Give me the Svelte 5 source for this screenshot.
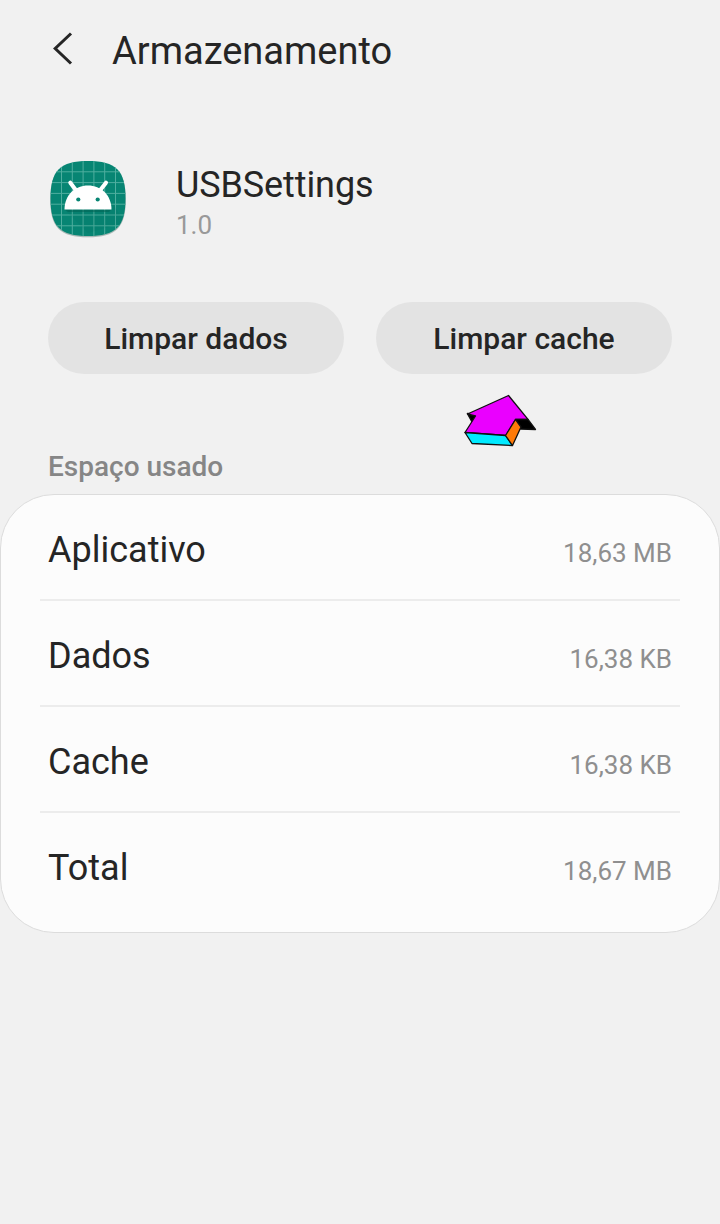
<script>
  const rows = [
    { label: 'Aplicativo', value: '18,63 MB' },
    { label: 'Dados', value: '16,38 KB' },
    { label: 'Cache', value: '16,38 KB' },
    { label: 'Total', value: '18,67 MB' },
  ];
  const grid = [13.5, 24.3, 35.1, 45.9, 56.7, 67.5];
</script>

<main>
  <header>
    <svg class="back" width="24" height="36" viewBox="0 0 24 36" aria-hidden="true">
      <path d="M21 2.500 5.200 17.500l15.800 15" fill="none" stroke="#252525" stroke-width="3" />
    </svg>
    <h1>Armazenamento</h1>
  </header>

  <section class="app">
    <svg width="80" height="80" viewBox="0 0 80 80" aria-hidden="true">
      <defs>
        <clipPath id="shape">
          <path d="M40 2C68 2 77.500 11.500 77.500 39.500S68 77 40 77 2.500 67.500 2.500 39.500 12 2 40 2Z" />
        </clipPath>
      </defs>
      <path d="M40 3C68 3 77.800 12.500 77.800 40.500S68 78.300 40 78.300 2.200 68.500 2.200 40.500 12 3 40 3Z" fill="#a9b9b6" />
      <g clip-path="url(#shape)">
        <rect width="80" height="80" fill="#078573" />
        {#each grid as p}
          <path d="M{p} 0V80M0 {p - 0.700}H80" stroke="#4fae9f" stroke-width="1" />
        {/each}
        <path d="M17 51 40 74l35-10V60L56 32Z" fill="#005f50" opacity=".08" />
        <path d="M16.500 50.500H63.500L61 53H20Z" fill="#005f50" opacity=".5" />
      </g>
      <path d="M22.300 23.700 27.800 31M58 23.700 52.300 31" stroke="#fff" stroke-width="4" stroke-linecap="round" />
      <path d="M16.500 50.500C16.500 36 27 26.500 40 26.500S63.500 36 63.500 50.500Z" fill="#fff" />
      <circle cx="30.300" cy="40.500" r="2.100" fill="#078573" />
      <circle cx="49.700" cy="40.500" r="2.100" fill="#078573" />
    </svg>
    <div>
      <h2>USBSettings</h2>
      <p>1.0</p>
    </div>
  </section>

  <div class="actions">
    <button>Limpar dados</button>
    <button>Limpar cache</button>
    <svg class="pointer" width="90" height="70" viewBox="0 0 90 70" aria-hidden="true">
      <g stroke="#111" stroke-width="1.3" stroke-linejoin="round">
        <path d="M12.300 28.500 22 29.500 17 37Z" fill="#000" />
        <path d="M53.500 10.500 12.500 29 20.500 31 10 47.500 51 50.500 60.500 34.500 73 34.300Z" fill="#ea00ff" />
        <path d="M73 34.300 80.500 44.500 65.500 44 60.500 34.500Z" fill="#000" />
        <path d="M10 47.500 50.500 50.500 57.500 60.500 17 58.500Z" fill="#00eaff" />
        <path d="M60.500 34.500 66 42 57.500 60.500 50.500 50.500Z" fill="#ff7a08" />
      </g>
    </svg>
  </div>

  <h3>Espaço usado</h3>
  <section class="card">
    {#each rows as row}
      <div class="row">
        <span class="label">{row.label}</span>
        <span class="value">{row.value}</span>
      </div>
    {/each}
  </section>
</main>

<style>
  :global(body) { background: #f1f1f1; }
  main {
    min-height: 1224px;
    box-sizing: border-box;
    background: #f1f1f1;
    color: #252525;
    font-family: Roboto, sans-serif;
  }
  h1, h2, h3, p { margin: 0; font-weight: 400; }
  header { display: flex; align-items: center; height: 100px; padding-left: 50px; }
  .back { margin-right: 38px; margin-top: -3px; }
  h1 { padding-top: 1px; font-size: 38px; line-height: 48px; }
  .app { display: flex; height: 80px; padding: 59px 0 0 48px; gap: 48px; }
  .app div { padding-top: 5px; }
  h2 { font-size: 36px; line-height: 42px; letter-spacing: -0.1px; }
  p { font-size: 26px; line-height: 38px; color: #999; }
  .actions { position: relative; display: flex; gap: 32px; padding: 63px 48px 0; }
  button {
    flex: 1;
    height: 72px;
    padding: 1px 0 0;
    border: 0;
    border-radius: 36px;
    background: #e3e3e3;
    color: #252525;
    font: 500 30px/71px Roboto, sans-serif;
  }
  .pointer { position: absolute; left: 455px; top: 146px; }
  h3 {
    height: 43px;
    padding: 77px 48px 0;
    color: #868686;
    font-size: 28px;
    font-weight: 500;
    line-height: 32px;
  }
  .card {
    box-sizing: border-box;
    height: 439px;
    padding: 0 39px;
    border: 1px solid #dcdcdc;
    border-radius: 54px;
    background: #fcfcfc;
  }
  .row {
    box-sizing: border-box;
    display: flex;
    align-items: baseline;
    justify-content: space-between;
    height: 106px;
    padding: 34px 8px 0;
    border-bottom: 2px solid #ececec;
  }
  .row:last-child { border-bottom: 0; }
  .label { font-size: 36px; line-height: 42px; }
  .value { font-size: 26px; line-height: 32px; color: #8f8f8f; }
</style>
